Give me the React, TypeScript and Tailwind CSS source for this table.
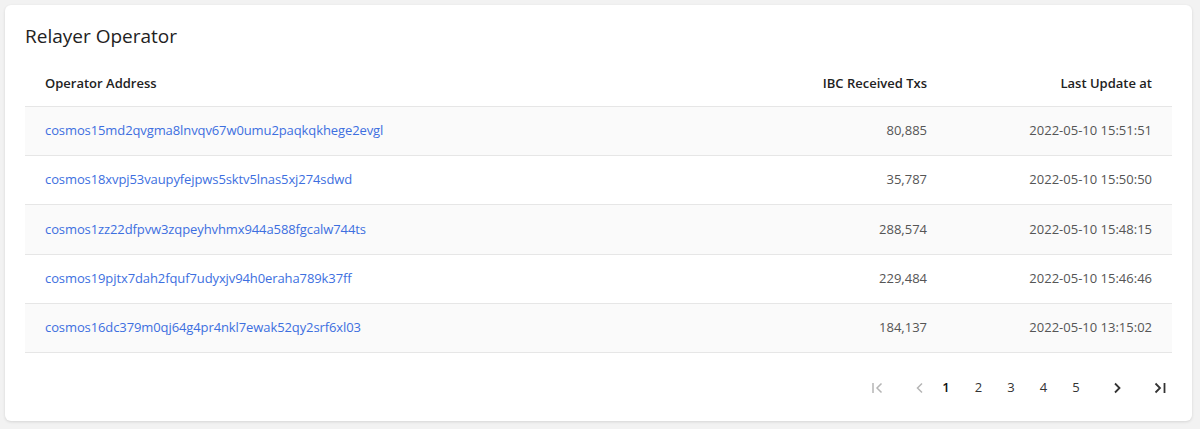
import React from "react";

const rows = [
  ["cosmos15md2qvgma8lnvqv67w0umu2paqkqkhege2evgl", "80,885", "2022-05-10 15:51:51"],
  ["cosmos18xvpj53vaupyfejpws5sktv5lnas5xj274sdwd", "35,787", "2022-05-10 15:50:50"],
  ["cosmos1zz22dfpvw3zqpeyhvhmx944a588fgcalw744ts", "288,574", "2022-05-10 15:48:15"],
  ["cosmos19pjtx7dah2fquf7udyxjv94h0eraha789k37ff", "229,484", "2022-05-10 15:46:46"],
  ["cosmos16dc379m0qj64g4pr4nkl7ewak52qy2srf6xl03", "184,137", "2022-05-10 13:15:02"],
];

export default function App() {
  return (
    <div className="w-[1200px] h-[429px] bg-[#f2f2f2] pt-[5px] pl-[5px] pr-[8px]" style={{ fontFamily: "'Open Sans', sans-serif" }}>
      <div className="bg-white rounded-[6px] shadow-[0_1px_3px_rgba(0,0,0,0.12)] h-[416px] px-[20px] pt-[17px]">
        <h2 className="text-[19px] leading-[28px] text-[#222] font-normal">Relayer Operator</h2>
        <div className="mt-[11px]">
          <div className="flex items-center h-[46px] border-b border-[#e6e6e6] text-[13px] font-semibold text-[#222] px-[20px]">
            <div className="flex-1">Operator Address</div>
            <div className="w-[200px] text-right">IBC Received Txs</div>
            <div className="w-[225px] text-right">Last Update at</div>
          </div>
          {rows.map((r, i) => (
            <div
              key={i}
              className={`flex items-center h-[49px] border-b border-[#e6e6e6] text-[13px] px-[20px] ${i === 2 ? "h-[50px]" : ""} ${i % 2 === 0 ? "bg-[#fafafa]" : "bg-white"}`}
            >
              <div className="flex-1 text-[#3d6fe0] tracking-[-0.1px]">{r[0]}</div>
              <div className="w-[200px] text-right text-[#555]">{r[1]}</div>
              <div className="w-[225px] text-right text-[#555]">{r[2]}</div>
            </div>
          ))}
        </div>
        <div className="flex items-center justify-end h-[70px] pr-[4px] text-[13px] text-[#333]">
          <svg width="16" height="16" viewBox="0 0 16 16" className="text-[#b5b5b5] mr-[26px]" fill="none" stroke="currentColor" strokeWidth="1.5">
            <path d="M3 3v10" />
            <path d="M11.5 3.5 7 8l4.5 4.5" />
          </svg>
          <svg width="16" height="16" viewBox="0 0 16 16" className="text-[#b5b5b5] mr-[2px]" fill="none" stroke="currentColor" strokeWidth="1.5">
            <path d="M10 3.5 5.5 8l4.5 4.5" />
          </svg>
          <span className="w-[32px] text-center font-semibold text-[#111]">1</span>
          <span className="w-[33px] text-center">2</span>
          <span className="w-[32px] text-center">3</span>
          <span className="w-[33px] text-center">4</span>
          <span className="w-[32px] text-center">5</span>
          <svg width="16" height="16" viewBox="0 0 16 16" className="text-[#333] ml-[17px] mr-[27px]" fill="none" stroke="currentColor" strokeWidth="1.8">
            <path d="M6 3.5 10.5 8 6 12.5" />
          </svg>
          <svg width="16" height="16" viewBox="0 0 16 16" className="text-[#333]" fill="none" stroke="currentColor" strokeWidth="1.8">
            <path d="M3.5 3.5 8 8l-4.5 4.5" />
            <path d="M12.5 3v10" />
          </svg>
        </div>
      </div>
    </div>
  );
}
